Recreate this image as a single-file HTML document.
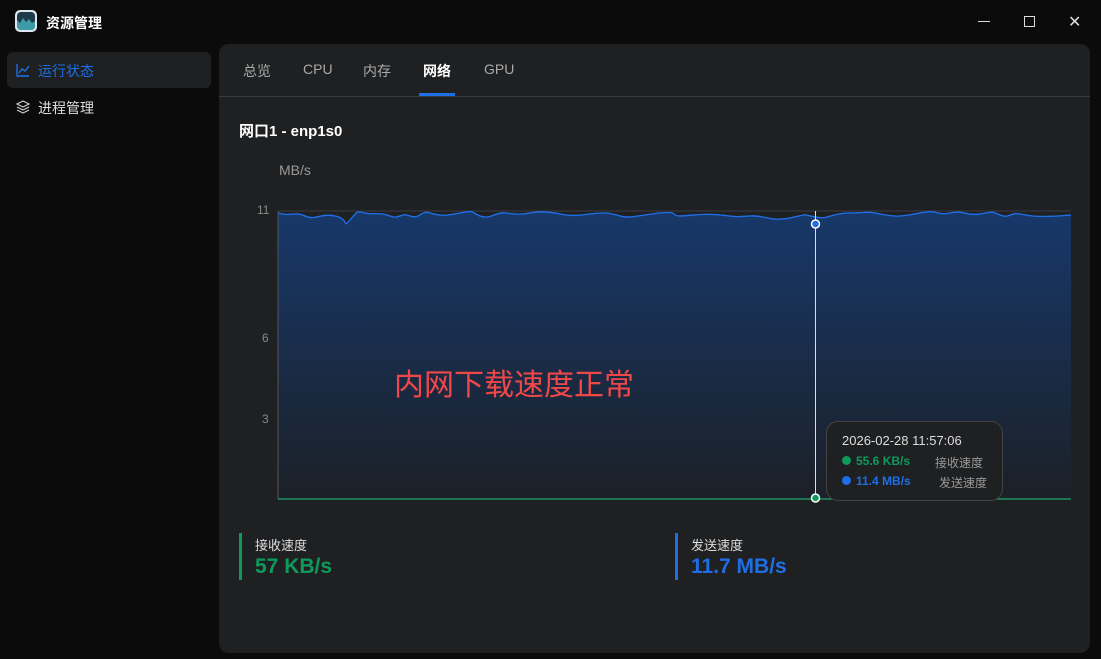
<!DOCTYPE html><html><head><meta charset="utf-8"><style>
body{margin:0;width:1101px;height:659px;background:#0b0b0c;font-family:"Liberation Sans","Noto Sans CJK SC",sans-serif;position:relative;overflow:hidden;color:#ddd}
.a{position:absolute}
</style></head><body>
<div class="a" style="left:15px;top:10px;width:22px;height:22px;border-radius:5px;background:#dfe6ee"></div>
<div class="a" style="left:17px;top:12px;width:18px;height:18px;border-radius:4px;background:#1f3a4a;overflow:hidden"><svg width="18" height="18"><path d="M0 18V8l3 3 3-5 3 4 3-3 3 4 3-2v9z" fill="#3d9ba8"/></svg></div>
<div class="a" style="left:46px;top:13px;font-size:14px;font-weight:bold;color:#fff">资源管理</div>
<div class="a" style="left:978px;top:21px;width:12px;height:1px;background:#ddd"></div>
<div class="a" style="left:1024px;top:16px;width:9px;height:9px;border:1px solid #ddd"></div>
<div class="a" style="left:1068px;top:12px;font-size:16px;color:#ddd">✕</div>
<div class="a" style="left:7px;top:52px;width:204px;height:36px;border-radius:6px;background:#1f2022"></div>
<svg class="a" style="left:15px;top:62px" width="16" height="16"><path d="M2 2v12h12M4 11l3-4 3 2 4-5" stroke="#1e6fe8" stroke-width="1.4" fill="none"/></svg>
<div class="a" style="left:38px;top:61px;font-size:14px;color:#1e6fe8">运行状态</div>
<svg class="a" style="left:15px;top:99px" width="16" height="16"><path d="M8 2l6 3-6 3-6-3zM2 8l6 3 6-3M2 11l6 3 6-3" stroke="#ccc" stroke-width="1.2" fill="none"/></svg>
<div class="a" style="left:38px;top:98px;font-size:14px;color:#ddd">进程管理</div>
<div class="a" style="left:219px;top:44px;width:871px;height:609px;border-radius:10px;background:#1f2022"></div>
<div class="a" style="left:219px;top:96px;width:871px;height:1px;background:#3a3b3e"></div>
<div class="a" style="top:61px;left:243px;font-size:14px;color:#aaa">总览</div>
<div class="a" style="top:61px;left:303px;font-size:14px;color:#aaa">CPU</div>
<div class="a" style="top:61px;left:363px;font-size:14px;color:#aaa">内存</div>
<div class="a" style="top:61px;left:423px;font-size:14px;color:#fff;font-weight:bold">网络</div>
<div class="a" style="top:61px;left:484px;font-size:14px;color:#aaa">GPU</div>
<div class="a" style="left:419px;top:93px;width:36px;height:3px;background:#1e6fe8"></div>
<div class="a" style="left:239px;top:120px;font-size:15px;font-weight:bold;color:#fff">网口1 - enp1s0</div>
<div class="a" style="left:279px;top:162px;font-size:14px;color:#999">MB/s</div>
<div class="a" style="left:257px;top:203px;font-size:12px;color:#888">11</div>
<div class="a" style="left:262px;top:331px;font-size:12px;color:#888">6</div>
<div class="a" style="left:262px;top:412px;font-size:12px;color:#888">3</div>
<svg class="a" style="left:0;top:0" width="1101" height="659">
<defs><linearGradient id="g" x1="0" y1="0" x2="0" y2="1"><stop offset="0" stop-color="#17386a"/><stop offset="1" stop-color="#1c2027"/></linearGradient></defs>
<line x1="278" y1="211" x2="1071" y2="211" stroke="#3a3d44"/>
<line x1="278" y1="339" x2="1071" y2="339" stroke="#363a44"/>
<line x1="278" y1="420" x2="1071" y2="420" stroke="#363a44"/>
<path id="p" d="M278 213 C290 217,295 211,305 216 S320 213,335 216 S342 229,350 220 S356 211,365 213 S380 212,390 216 S400 212,410 216 S420 210,430 213 S445 216,460 213 S470 212,480 216 S495 212,505 213 S520 215,530 213 S550 212,560 214 S575 216,590 214 S610 213,620 216 S640 215,660 213 S670 216,680 216 S700 213,720 215 S735 217,750 216 S770 222,790 218 S800 214,815 217 S830 213,850 213 S865 211,880 214 S900 217,920 213 S935 216,950 213 S965 216,980 214 S990 211,1000 215 S1010 212,1020 214 S1040 218,1071 215" fill="none" stroke="#1f6ee6" stroke-width="1.3"/>
<path d="M278 213 C290 217,295 211,305 216 S320 213,335 216 S342 229,350 220 S356 211,365 213 S380 212,390 216 S400 212,410 216 S420 210,430 213 S445 216,460 213 S470 212,480 216 S495 212,505 213 S520 215,530 213 S550 212,560 214 S575 216,590 214 S610 213,620 216 S640 215,660 213 S670 216,680 216 S700 213,720 215 S735 217,750 216 S770 222,790 218 S800 214,815 217 S830 213,850 213 S865 211,880 214 S900 217,920 213 S935 216,950 213 S965 216,980 214 S990 211,1000 215 S1010 212,1020 214 S1040 218,1071 215 V499 H278Z" fill="url(#g)"/>
<use href="#p"/>
<line x1="278" y1="211" x2="278" y2="499" stroke="#555"/>
<line x1="278" y1="499" x2="1071" y2="499" stroke="#1d9060" stroke-width="1.5"/>
<line x1="815.5" y1="211" x2="815.5" y2="499" stroke="#ddd"/>
<circle cx="815.5" cy="224" r="4" fill="#1f6ee6" stroke="#fff" stroke-width="1.5"/>
<circle cx="815.5" cy="498" r="4" fill="#0d9a5c" stroke="#fff" stroke-width="1.5"/>
</svg>
<div class="a" style="left:394px;top:360px;font-size:30px;color:#f04848">内网下载速度正常</div>
<div class="a" style="left:826px;top:421px;width:175px;height:78px;border-radius:12px;background:#1f2022;border:1px solid #444"></div>
<div class="a" style="left:842px;top:433px;font-size:13px;color:#ddd">2026-02-28 11:57:06</div>
<div class="a" style="left:842px;top:456px;width:9px;height:9px;border-radius:50%;background:#0d9a5c"></div>
<div class="a" style="left:856px;top:454px;font-size:12px;font-weight:bold;color:#0d9a5c">55.6 KB/s</div>
<div class="a" style="left:935px;top:454px;font-size:12px;color:#999">接收速度</div>
<div class="a" style="left:842px;top:476px;width:9px;height:9px;border-radius:50%;background:#1f6ee6"></div>
<div class="a" style="left:856px;top:474px;font-size:12px;font-weight:bold;color:#1f6ee6">11.4 MB/s</div>
<div class="a" style="left:939px;top:474px;font-size:12px;color:#999">发送速度</div>
<div class="a" style="left:239px;top:533px;width:3px;height:47px;background:#0d9a5c"></div>
<div class="a" style="left:255px;top:535px;font-size:13px;color:#ddd">接收速度</div>
<div class="a" style="left:255px;top:555px;font-size:21px;font-weight:bold;color:#0d9a5c">57 KB/s</div>
<div class="a" style="left:675px;top:533px;width:3px;height:47px;background:#1f6ee6"></div>
<div class="a" style="left:691px;top:535px;font-size:13px;color:#ddd">发送速度</div>
<div class="a" style="left:691px;top:555px;font-size:21px;font-weight:bold;color:#1f6ee6">11.7 MB/s</div>
</body></html>
